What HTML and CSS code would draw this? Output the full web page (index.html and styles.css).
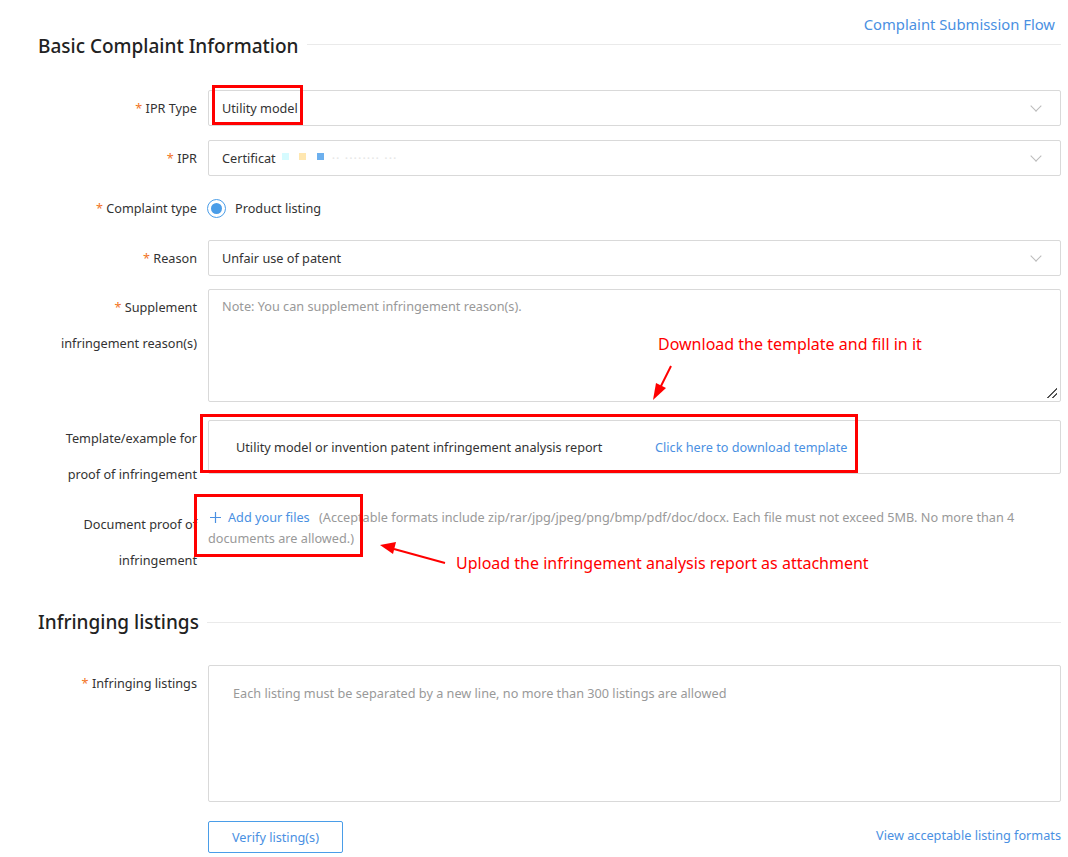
FILE: index.html
```html
<!DOCTYPE html>
<html>
<head>
<meta charset="utf-8">
<link rel="stylesheet" href="styles.css">
</head>
<body>
<div class="page">
  <div class="topbar"><a class="link flow">Complaint Submission Flow</a></div>

  <div class="section-head first"><h2>Basic Complaint Information</h2><div class="rule"></div></div>

  <div class="row">
    <div class="label"><span class="req">*</span> IPR Type</div>
    <div class="field select"><span>Utility model</span><span class="chev"></span></div>
  </div>

  <div class="row">
    <div class="label"><span class="req">*</span> IPR</div>
    <div class="field select">
      <span class="masked">Certificat<i class="px c1"></i><i class="px c2"></i><i class="px c3"></i><span class="blur">·· ········ ···</span></span>
      <span class="chev"></span>
    </div>
  </div>

  <div class="row">
    <div class="label"><span class="req">*</span> Complaint type</div>
    <div class="radio-line"><span class="radio"><span class="dot"></span></span><span>Product listing</span></div>
  </div>

  <div class="row tight">
    <div class="label"><span class="req">*</span> Reason</div>
    <div class="field select"><span>Unfair use of patent</span><span class="chev"></span></div>
  </div>

  <div class="row wide">
    <div class="label"><span class="req">*</span> Supplement<br>infringement reason(s)</div>
    <div class="field textarea"><span class="ph">Note: You can supplement infringement reason(s).</span><span class="grip"></span></div>
  </div>

  <div class="row">
    <div class="label">Template/example for<br>proof of infringement</div>
    <div class="field template"><span class="tpl-name">Utility model or invention patent infringement analysis report</span><a class="link">Click here to download template</a></div>
  </div>

  <div class="row">
    <div class="label">Document proof of<br>infringement</div>
    <div class="upload"><span class="add"><svg class="plus" width="11" height="11" viewBox="0 0 11 11"><path d="M5.5 0V11M0 5.5H11" stroke="#4a90e2" stroke-width="1.2"/></svg>Add your files</span> (Acceptable formats include zip/rar/jpg/jpeg/png/bmp/pdf/doc/docx. Each file must not exceed 5MB. No more than 4 documents are allowed.)</div>
  </div>

  <div class="section-head second"><h2>Infringing listings</h2><div class="rule"></div></div>

  <div class="row">
    <div class="label"><span class="req">*</span> Infringing listings</div>
    <div class="field listings"><span class="ph">Each listing must be separated by a new line, no more than 300 listings are allowed</span></div>
  </div>

  <div class="row actions">
    <div class="label"></div>
    <div class="action-line"><button class="btn">Verify listing(s)</button><a class="link">View acceptable listing formats</a></div>
  </div>

  <!-- annotations -->
  <div class="mark m1"></div>
  <div class="mark m2"></div>
  <div class="mark m3"></div>
  <div class="note n1">Download the template and fill in it</div>
  <div class="note n2">Upload the infringement analysis report as attachment</div>
  <svg class="arrows" width="1068" height="857" viewBox="0 0 1068 857">
    <line x1="671" y1="366" x2="660" y2="388" stroke="#f00" stroke-width="2"/>
    <polygon points="653,400 656,383 666,388" fill="#f00"/>
    <line x1="445" y1="563" x2="394" y2="549" stroke="#f00" stroke-width="2"/>
    <polygon points="380,545 396,542 393,554" fill="#f00"/>
  </svg>
</div>
</body>
</html>
```

FILE: styles.css
```css
* { box-sizing: border-box; }
html, body { margin: 0; padding: 0; background: #fff; }
body { font-family: "Noto Sans", "Open Sans", sans-serif; font-size: 12.7px; color: #333; }
.page { position: relative; width: 1068px; height: 857px; overflow: hidden; padding: 0 7px 0 38px; }
.link { color: #4a90e2; cursor: pointer; text-decoration: none; }
.topbar { display: flex; justify-content: flex-end; padding-top: 13px; height: 35px; }
.flow { font-size: 14.8px; line-height: 22px; margin-right: 6px; }
.section-head { display: flex; align-items: center; gap: 8px; }
.section-head h2 { margin: 0; font-size: 19px; font-weight: 500; color: #222; line-height: 24px; }
.section-head .rule { flex: 1; height: 1px; background: #eaeaea; }
.section-head.first { margin-top: -1px; margin-bottom: 32px; }
.section-head.first .rule { margin-top: -3px; }
.section-head.second { margin-top: 32px; margin-bottom: 31px; }
.row { display: flex; gap: 11px; margin-bottom: 14px; }
.row.tight { margin-bottom: 13px; }
.row.wide { margin-bottom: 18px; }
.label { width: 159px; flex: none; text-align: right; line-height: 36px; color: #333; }
.req { color: #f2741f; }
.field { flex: 1; border: 1px solid #d9d9d9; border-radius: 2px; background: #fff; }
.select { height: 36px; display: flex; align-items: center; justify-content: space-between; padding: 0 14px 0 13px; }
.chev { width: 8px; height: 8px; border-right: 1px solid #bbb; border-bottom: 1px solid #bbb; transform: rotate(45deg); margin-top: -5px; margin-right: 6px; }
.masked { display: flex; align-items: center; }
.px { display: inline-block; width: 7px; height: 7px; margin-top: -4px; }
.c1 { background: #d6fbff; margin-left: 6px; }
.c2 { background: #ffe7b0; margin-left: 10px; }
.c3 { background: #6db0ee; margin-left: 11px; }
.blur { color: #e6e6e6; margin-left: 8px; letter-spacing: 1px; }
.radio-line { display: flex; align-items: center; height: 36px; gap: 9px; margin-left: -1px; }
.radio { width: 19px; height: 19px; border: 1px solid #4a9de8; border-radius: 50%; display: flex; align-items: center; justify-content: center; }
.radio .dot { width: 11px; height: 11px; border-radius: 50%; background: #4a9de8; }
.textarea { height: 113px; position: relative; padding: 7px 13px; }
.ph { color: #999; }
.grip { position: absolute; right: 3px; bottom: 3px; width: 10px; height: 10px;
  background: linear-gradient(135deg, transparent 45%, #555 45%, #555 55%, transparent 55%, transparent 70%, #555 70%, #555 80%, transparent 80%); }
.template { height: 54px; margin-bottom: 18px; display: flex; align-items: center; padding: 0 27px; }
.tpl-name { width: 419px; flex: none; }
.upload { flex: 1; line-height: 21px; padding-top: 1px; color: #999; }
.add { color: #4a90e2; margin-right: 6px; }
.plus { margin-right: 7px; margin-left: 2px; vertical-align: -1px; }
.listings { height: 137px; padding: 18px 24px; }
.actions { padding-top: 5px; }
.action-line { flex: 1; display: flex; justify-content: space-between; align-items: center; }
.btn { width: 135px; height: 32px; border: 1px solid #4a9de8; background: #fff; color: #4a90e2; border-radius: 2px; font-family: inherit; font-size: 12.7px; padding: 0; }
.action-line .link { margin-top: -4px; }
.mark { position: absolute; border: 3px solid #f00; }
.m1 { left: 212px; top: 85px; width: 91px; height: 40px; }
.m2 { left: 200px; top: 414px; width: 658px; height: 59px; }
.m3 { left: 194px; top: 494px; width: 169px; height: 63px; }
.note { position: absolute; color: #f00; font-size: 16px; line-height: 20px; }
.n1 { left: 658px; top: 334px; }
.n2 { left: 456px; top: 553px; }
.arrows { position: absolute; left: 0; top: 0; pointer-events: none; }
```
